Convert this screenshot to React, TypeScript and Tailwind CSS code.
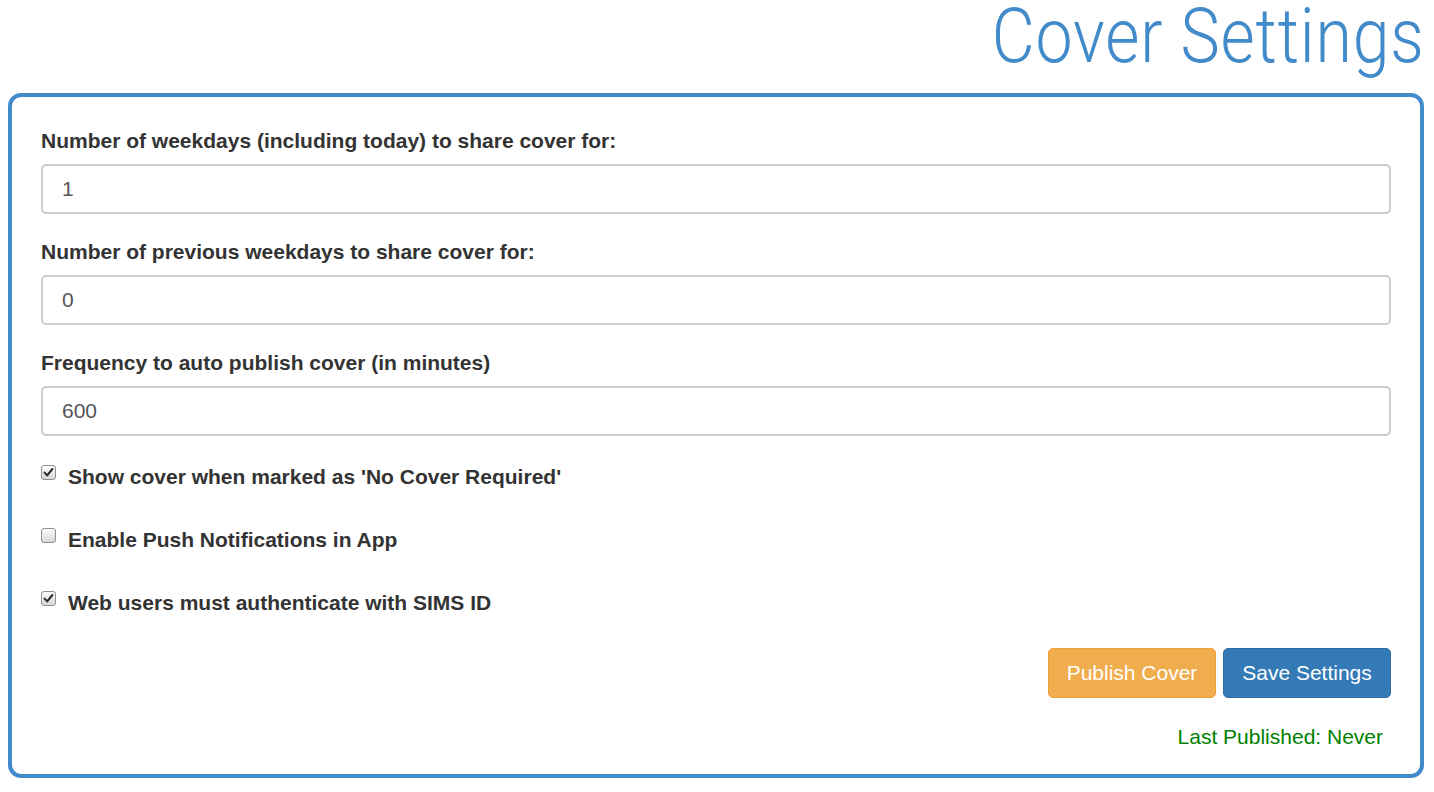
import React from "react";

function Check({ checked }: { checked: boolean }) {
  return (
    <span className="relative inline-flex h-[15px] w-[15px] shrink-0 items-center justify-center rounded-[3px] border border-[#8e8f8f] bg-gradient-to-b from-[#fcfcfc] to-[#d8d8d8]">
      {checked && (
        <svg width="11" height="11" viewBox="0 0 11 11" className="block">
          <path d="M1.6 5.6 L4.2 8.4 L9.4 2" fill="none" stroke="#2b2b2b" strokeWidth="2.1" strokeLinecap="round" strokeLinejoin="round" />
        </svg>
      )}
    </span>
  );
}

function Field({ label, value }: { label: string; value: string }) {
  return (
    <div className="mb-[23px]">
      <div className="mb-[8px] text-[21px] font-bold leading-[30px] text-[#333]">{label}</div>
      <div className="flex h-[50px] items-center rounded-[5px] border-2 border-[#cccccc] bg-white px-[19px] text-[21px] text-[#555]">
        {value}
      </div>
    </div>
  );
}

function CheckRow({ label, checked }: { label: string; checked: boolean }) {
  return (
    <div className="flex h-[30px] items-start gap-[12px]">
      <span className="mt-[3px] flex">
        <Check checked={checked} />
      </span>
      <span className="text-[21px] font-bold leading-[30px] text-[#333]">{label}</span>
    </div>
  );
}

export default function App() {
  return (
    <div className="min-h-[792px] w-[1434px] bg-white" style={{ fontFamily: '"Liberation Sans", Arial, sans-serif' }}>
      <div className="flex h-[93px] items-start justify-end overflow-hidden pr-[9px]">
        <h1
          className="origin-right scale-x-[0.87] whitespace-nowrap text-[76px] font-light leading-[72px] tracking-[1px] text-[#428bca]"
          style={{ fontFamily: 'Roboto, "Liberation Sans", sans-serif' }}
        >
          Cover Settings
        </h1>
      </div>
      <div className="mx-[8px] w-[1416px] rounded-[13px] border-4 border-[#428bca] px-[29px] pb-[22px] pt-[29px]">
        <Field label="Number of weekdays (including today) to share cover for:" value="1" />
        <Field label="Number of previous weekdays to share cover for:" value="0" />
        <Field label="Frequency to auto publish cover (in minutes)" value="600" />
        <div className="mt-[26px] flex flex-col gap-[33px]">
          <CheckRow label="Show cover when marked as 'No Cover Required'" checked />
          <CheckRow label="Enable Push Notifications in App" checked={false} />
          <CheckRow label="Web users must authenticate with SIMS ID" checked />
        </div>
        <div className="mt-[30px] flex justify-end gap-[7px]">
          <button className="h-[50px] w-[168px] rounded-[5px] border border-[#eea236] bg-[#f0ad4e] text-[21px] text-white">
            Publish Cover
          </button>
          <button className="h-[50px] w-[168px] rounded-[5px] border border-[#2e6da4] bg-[#337ab7] text-[21px] text-white">
            Save Settings
          </button>
        </div>
        <div className="mt-[24px] flex justify-end pr-[8px] text-[21px] leading-[30px] text-[#008000]">
          Last Published: Never
        </div>
      </div>
    </div>
  );
}
